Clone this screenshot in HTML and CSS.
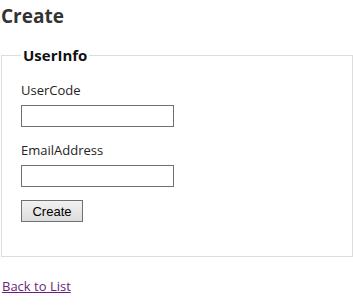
FILE: index.html
```html
<!DOCTYPE html>
<html lang="en">
<head>
  <meta charset="UTF-8" />
  <title>Create</title>
  <link rel="stylesheet" href="styles.css">
</head>
<body>
  <h2>Create</h2>

  <form class="create-form">
    <fieldset>
      <legend>UserInfo</legend>

      <div class="editor-label first">
        <label for="UserCode">UserCode</label>
      </div>
      <div class="editor-field">
        <input type="text" id="UserCode" name="UserCode">
      </div>

      <div class="editor-label">
        <label for="EmailAddress">EmailAddress</label>
      </div>
      <div class="editor-field">
        <input type="text" id="EmailAddress" name="EmailAddress">
      </div>

      <p class="actions">
        <input type="submit" value="Create">
      </p>
    </fieldset>
  </form>

  <div class="back-link">
    <a href="#">Back to List</a>
  </div>
</body>
</html>
```

FILE: styles.css
```css
body {
  margin: 0;
  padding: 0 0 0 1px;
  font-family: "Open Sans", "Noto Sans", sans-serif;
  font-size: 13px;
  color: #232323;
  background: #fff;
}

h2 {
  margin: 0;
  padding-top: 3px;
  font-size: 19px;
  font-weight: bold;
  color: #333;
  line-height: 26px;
}

fieldset {
  margin: 16px 0 0 0;
  padding: 0 19px 34px 19px;
  border: 1px solid #ddd;
}

legend {
  padding: 0 2px;
  font-size: 15px;
  font-weight: bold;
  color: #111;
}

.editor-label {
  margin-top: 14px;
  line-height: 18px;
}

.editor-label.first {
  margin-top: 16px;
}

.editor-field {
  margin-top: 6px;
}

.editor-field input {
  box-sizing: border-box;
  width: 153px;
  height: 22px;
  margin: 0;
  border: 1px solid #707070;
  font-family: "Open Sans", sans-serif;
  font-size: 13px;
}

.actions {
  margin: 13px 0 0 0;
}

.actions input {
  box-sizing: border-box;
  width: 62px;
  height: 22px;
  padding: 0;
  border: 1px solid #707070;
  background: linear-gradient(#f2f2f2, #dcdcdc);
  font-family: "Liberation Sans", Arial, sans-serif;
  font-size: 13px;
  color: #000;
}

.back-link {
  margin-top: 20px;
  padding-left: 1px;
}

.back-link a {
  color: #6a1f7a;
  font-size: 13px;
}
```
